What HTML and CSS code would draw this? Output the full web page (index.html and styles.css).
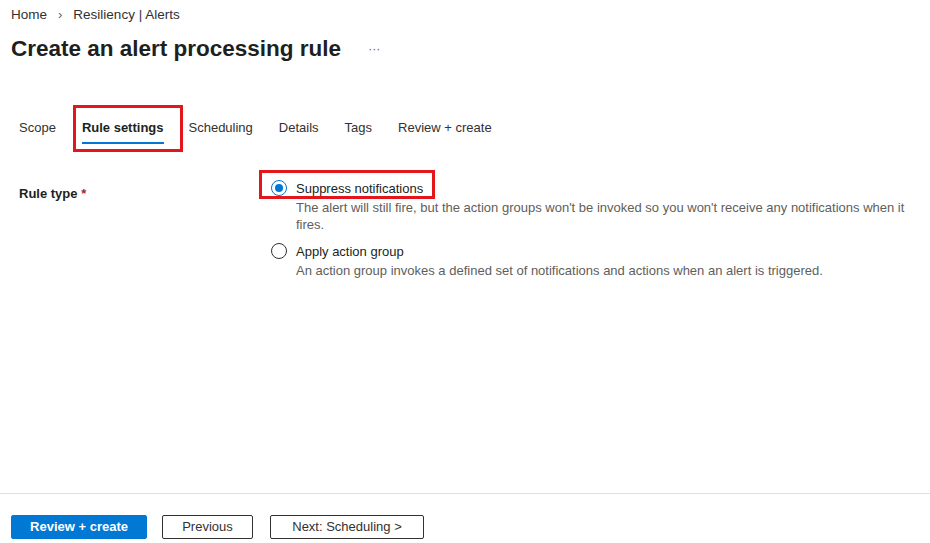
FILE: index.html
```html
<!DOCTYPE html>
<html>

<head>
    <meta charset="UTF-8" />
    <title>Create an alert processing rule</title>
    <link rel="stylesheet" href="styles.css">
</head>

<body>
    <div class="page">
        <nav class="breadcrumb">
            <a href="#">Home</a>
            <span class="crumb-sep">&rsaquo;</span>
            <a href="#">Resiliency | Alerts</a>
        </nav>

        <div class="title-row">
            <h1>Create an alert processing rule</h1>
            <span class="more">&middot;&middot;&middot;</span>
        </div>

        <div class="tabs">
            <span class="tab">Scope</span>
            <span class="tab active highlight">Rule settings</span>
            <span class="tab">Scheduling</span>
            <span class="tab">Details</span>
            <span class="tab">Tags</span>
            <span class="tab">Review + create</span>
        </div>

        <div class="form-row">
            <div class="field-label">Rule type <span class="required">*</span></div>
            <div class="options">
                <label class="option">
                    <span class="option-head highlight">
                        <span class="radio checked"></span>
                        <span class="option-title">Suppress notifications</span>
                    </span>
                    <span class="option-desc">The alert will still fire, but the action groups won't be invoked so you won't receive any notifications when it fires.</span>
                </label>
                <label class="option">
                    <span class="option-head">
                        <span class="radio"></span>
                        <span class="option-title">Apply action group</span>
                    </span>
                    <span class="option-desc">An action group invokes a defined set of notifications and actions when an alert is triggered.</span>
                </label>
            </div>
        </div>
    </div>

    <footer class="footer">
        <button class="btn primary">Review + create</button>
        <button class="btn prev">Previous</button>
        <button class="btn next">Next: Scheduling &gt;</button>
    </footer>
</body>

</html>
```

FILE: styles.css
```css
html,
body {
    height: 100%;
}

body {
    font-family: "Liberation Sans", Arial, sans-serif;
    font-size: 13px;
    color: #323130;
    margin: 0;
    padding: 0;
    display: flex;
    flex-direction: column;
}

.page {
    flex: 1;
    padding: 0 11px;
}

.breadcrumb {
    display: flex;
    align-items: center;
    gap: 10px;
    height: 16px;
    padding-top: 6px;
    font-size: 13.5px;
}

.breadcrumb a {
    color: #323130;
    text-decoration: none;
}

.crumb-sep {
    color: #605e5c;
    font-size: 13px;
    margin: 0 1px;
}

.title-row {
    display: flex;
    align-items: center;
    margin-top: 13px;
    height: 28px;
}

h1 {
    font-size: 22.5px;
    font-weight: 600;
    margin: 0;
    color: #201f1e;
}

.more {
    margin-left: 27px;
    color: #605e5c;
    font-size: 12px;
}

.tabs {
    display: flex;
    align-items: center;
    margin-top: 45px;
    padding-left: 8px;
    font-size: 13px;
}

.tab {
    position: relative;
    padding: 12px 0;
    margin-right: 26px;
    color: #323130;
}

.tab.active {
    font-weight: 600;
    color: #201f1e;
    margin-right: 25px;
}

.tab.active::before {
    content: "";
    position: absolute;
    left: 0;
    right: 0;
    bottom: 3px;
    height: 2px;
    background-color: #0078d4;
}

/* red annotation frames */
.tab.highlight::after {
    content: "";
    position: absolute;
    left: -9px;
    right: -19px;
    top: -3px;
    bottom: -5px;
    border: 3px solid #e3161b;
}

.form-row {
    display: flex;
    margin-top: 30px;
    padding-left: 8px;
}

.field-label {
    width: 252px;
    flex-shrink: 0;
    font-weight: 600;
    color: #201f1e;
    padding-top: 9px;
}

.required {
    color: #a4262c;
}

.options {
    display: flex;
    flex-direction: column;
    gap: 7px;
    flex: 1;
    margin-right: -8px;
}

.option {
    display: flex;
    flex-direction: column;
}

.option-head {
    position: relative;
    display: flex;
    align-items: center;
    gap: 9px;
    height: 22px;
}

.option-head.highlight::after {
    content: "";
    position: absolute;
    left: -12px;
    width: 176px;
    top: -7px;
    height: 29px;
    box-sizing: border-box;
    border: 3px solid #e3161b;
}

.radio {
    width: 16px;
    height: 16px;
    border: 1px solid #323130;
    border-radius: 50%;
    box-sizing: border-box;
    display: flex;
    align-items: center;
    justify-content: center;
}

.radio.checked {
    border-color: #0078d4;
}

.radio.checked::after {
    content: "";
    width: 8px;
    height: 8px;
    border-radius: 50%;
    background-color: #0078d4;
}

.option-title {
    color: #201f1e;
}

.option-desc {
    color: #605e5c;
    padding-left: 25px;
    line-height: 17px;
    font-size: 13px;
}

.footer {
    border-top: 1px solid #e1dfdd;
    height: 49px;
    display: flex;
    align-items: center;
    gap: 15px;
    padding: 0 11px;
    flex-shrink: 0;
}

.btn {
    font-family: inherit;
    font-size: 13px;
    height: 24px;
    padding: 0;
    white-space: nowrap;
    background-color: #fff;
    border: 1px solid #323130;
    border-radius: 2px;
    color: #323130;
    cursor: pointer;
    margin-top: 16px;
}

.btn.primary {
    background-color: #0078d4;
    border-color: #0078d4;
    color: #fff;
    font-weight: 600;
    width: 136px;
}

.btn.prev {
    width: 91px;
}

.btn.next {
    width: 154px;
    margin-left: 2px;
}

.btn:hover {
    background-color: #f3f2f1;
}

.btn.primary:hover {
    background-color: #106ebe;
}
```
